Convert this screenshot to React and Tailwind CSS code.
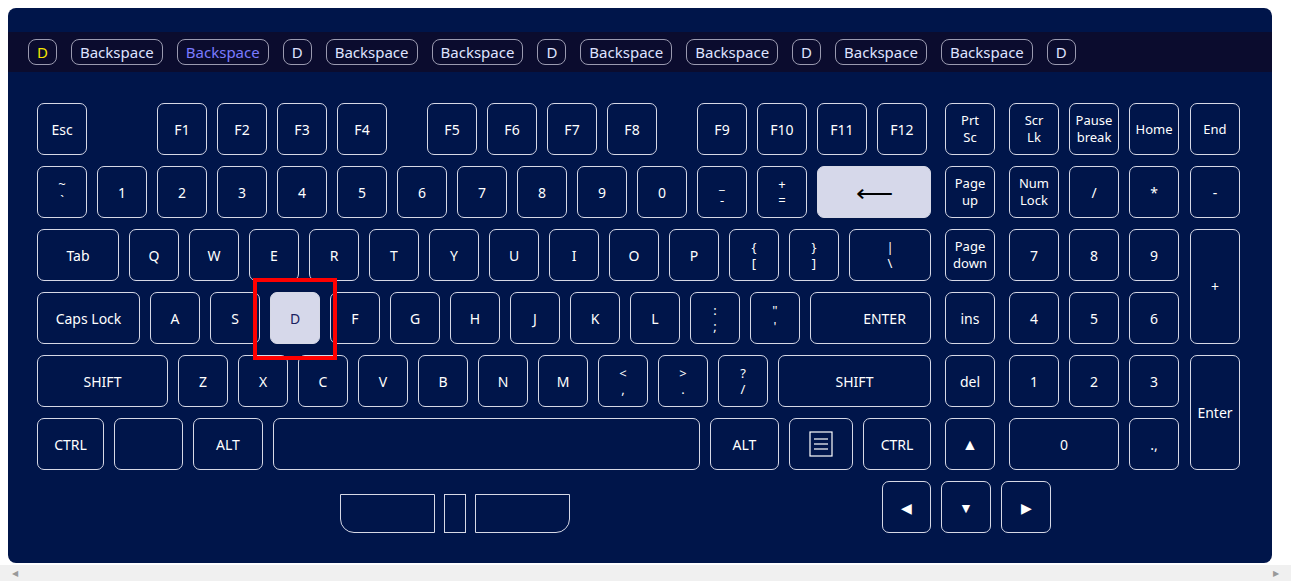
const FONT = { fontFamily: '"Noto Sans", "Open Sans", sans-serif' };

function Key({ w = 'w-[50px]', children, active, className = '' }) {
  return (
    <div
      className={`${w} h-[52px] shrink-0 rounded-[7px] border border-[#d6d8e6] flex flex-col items-center justify-center text-[14px] leading-[17px] ${
        active ? 'bg-[#d6d8ea] text-[#1a2060]' : 'text-white'
      } ${className}`}
    >
      {children}
    </div>
  );
}

function Two({ a, b }) {
  return (
    <Key>
      <span className="text-[13px] leading-[16px]">{a}</span>
      <span className="text-[13px] leading-[16px]">{b}</span>
    </Key>
  );
}

function Pill({ children, color = 'text-[#dfe3ff]' }) {
  return (
    <div className={`h-[26px] px-[8px] rounded-lg border border-[#9a9ab0] flex items-center text-[15px] ${color}`}>
      {children}
    </div>
  );
}

function MenuIcon() {
  return (
    <svg width="24" height="26" viewBox="0 0 24 26" fill="none" stroke="white" strokeWidth="1.2">
      <rect x="1" y="1" width="22" height="24" />
      <line x1="5" y1="8" x2="19" y2="8" />
      <line x1="5" y1="13" x2="19" y2="13" />
      <line x1="5" y1="18" x2="19" y2="18" />
    </svg>
  );
}

export default function App() {
  const top = ['D', 'Backspace', 'Backspace', 'D', 'Backspace', 'Backspace', 'D', 'Backspace', 'Backspace', 'D', 'Backspace', 'Backspace', 'D'];
  return (
    <div className="bg-white w-[1291px] h-[583px] overflow-hidden" style={FONT}>
      <div className="pt-[8px] pl-[8px]">
        <div className="w-[1264px] h-[555px] bg-[#00154a] rounded-lg pt-[24px]">
          <div className="h-[40px] bg-[#0b0c2e] flex items-center gap-[14px] pl-[20px]">
            {top.map((t, i) => (
              <Pill key={i} color={i === 0 ? 'text-[#f5e500]' : i === 2 ? 'text-[#7b7bff]' : 'text-[#dfe3ff]'}>
                {t}
              </Pill>
            ))}
          </div>

          <div className="flex pl-[29px] pt-[31px] gap-[14px]">
            {/* main block */}
            <div className="w-[894px] flex flex-col gap-[11px]">
              <div className="flex gap-[10px]">
                <Key>Esc</Key>
                <Key className="ml-[60px]">F1</Key>
                <Key>F2</Key>
                <Key>F3</Key>
                <Key>F4</Key>
                <Key className="ml-[30px]">F5</Key>
                <Key>F6</Key>
                <Key>F7</Key>
                <Key>F8</Key>
                <Key className="ml-[30px]">F9</Key>
                <Key>F10</Key>
                <Key>F11</Key>
                <Key>F12</Key>
              </div>
              <div className="flex gap-[10px]">
                <Two a="~" b="`" />
                {['1', '2', '3', '4', '5', '6', '7', '8', '9', '0'].map((k) => (
                  <Key key={k}>{k}</Key>
                ))}
                <Two a="_" b="-" />
                <Two a="+" b="=" />
                <Key w="flex-1" active>
                  <span className="text-[26px] text-black leading-none">⟵</span>
                </Key>
              </div>
              <div className="flex gap-[10px]">
                <Key w="w-[82px]">Tab</Key>
                {['Q', 'W', 'E', 'R', 'T', 'Y', 'U', 'I', 'O', 'P'].map((k) => (
                  <Key key={k}>{k}</Key>
                ))}
                <Two a="{" b="[" />
                <Two a="}" b="]" />
                <Key w="flex-1">
                  <span className="text-[13px] leading-[16px]">|</span>
                  <span className="text-[13px] leading-[16px]">\</span>
                </Key>
              </div>
              <div className="flex gap-[10px]">
                <Key w="w-[103px]">Caps Lock</Key>
                <Key>A</Key>
                <Key>S</Key>
                <div className="relative">
                  <Key active>D</Key>
                  <div className="absolute -left-[17px] -top-[14px] w-[84px] h-[82px] border-4 border-[#ff0000]" />
                </div>
                {['F', 'G', 'H', 'J', 'K', 'L'].map((k) => (
                  <Key key={k}>{k}</Key>
                ))}
                <Two a=":" b=";" />
                <Two a={'"'} b="'" />
                <Key w="flex-1">
                  <span className="pl-[28px]">ENTER</span>
                </Key>
              </div>
              <div className="flex gap-[10px]">
                <Key w="w-[131px]">SHIFT</Key>
                {['Z', 'X', 'C', 'V', 'B', 'N', 'M'].map((k) => (
                  <Key key={k}>{k}</Key>
                ))}
                <Two a="<" b="," />
                <Two a=">" b="." />
                <Two a="?" b="/" />
                <Key w="flex-1">SHIFT</Key>
              </div>
              <div className="flex gap-[10px]">
                <Key w="w-[67px]">CTRL</Key>
                <Key w="w-[69px]" />
                <Key w="w-[70px]">ALT</Key>
                <Key w="flex-1" />
                <Key w="w-[69px]">ALT</Key>
                <Key w="w-[64px]">
                  <MenuIcon />
                </Key>
                <Key w="w-[68px]">CTRL</Key>
              </div>
            </div>

            {/* nav column */}
            <div className="w-[50px] flex flex-col gap-[11px]">
              <Key><span className="text-[13px]">Prt</span><span className="text-[13px]">Sc</span></Key>
              <Key><span className="text-[13px]">Page</span><span className="text-[13px]">up</span></Key>
              <Key><span className="text-[13px]">Page</span><span className="text-[13px]">down</span></Key>
              <Key>ins</Key>
              <Key>del</Key>
              <Key><span className="text-[16px]">▲</span></Key>
            </div>

            {/* numpad */}
            <div className="grid grid-cols-[50px_50px_51px_50px] grid-rows-[52px_52px_52px_52px_52px_52px] gap-x-[10px] gap-y-[11px]">
              <Key><span className="text-[13px]">Scr</span><span className="text-[13px]">Lk</span></Key>
              <Key><span className="text-[13px]">Pause</span><span className="text-[13px]">break</span></Key>
              <Key><span className="text-[13px]">Home</span></Key>
              <Key><span className="text-[13px]">End</span></Key>
              <Key><span className="text-[13px]">Num</span><span className="text-[13px]">Lock</span></Key>
              <Key>/</Key>
              <Key>*</Key>
              <Key>-</Key>
              <Key>7</Key>
              <Key>8</Key>
              <Key>9</Key>
              <Key className="row-span-2 h-auto">+</Key>
              <Key>4</Key>
              <Key>5</Key>
              <Key>6</Key>
              <Key>1</Key>
              <Key>2</Key>
              <Key>3</Key>
              <Key className="row-span-2 h-auto">Enter</Key>
              <Key w="w-auto" className="col-span-2">0</Key>
              <Key>.,</Key>
            </div>
          </div>

          <div className="flex pl-[332px] pt-[11px]">
            <div className="flex gap-[10px] mt-[13px]">
              <div className="w-[95px] h-[39px] border border-[#d6d8e6] rounded-bl-[14px]" />
              <div className="w-[22px] h-[39px] border border-[#d6d8e6] -ml-[1px]" />
              <div className="w-[95px] h-[39px] border border-[#d6d8e6] rounded-br-[14px] -ml-[1px]" />
            </div>
            <div className="flex gap-[10px] ml-[312px]">
              <Key w="w-[49px]"><span className="text-[14px]">◀</span></Key>
              <Key><span className="text-[14px]">▼</span></Key>
              <Key><span className="text-[14px]">▶</span></Key>
            </div>
          </div>
        </div>
      </div>
      <div className="mt-[2px] h-[16px] bg-[#f0f0f0] flex items-center justify-between px-[12px] text-[8px] text-[#999]">
        <span>◀</span>
        <span>▶</span>
      </div>
    </div>
  );
}
